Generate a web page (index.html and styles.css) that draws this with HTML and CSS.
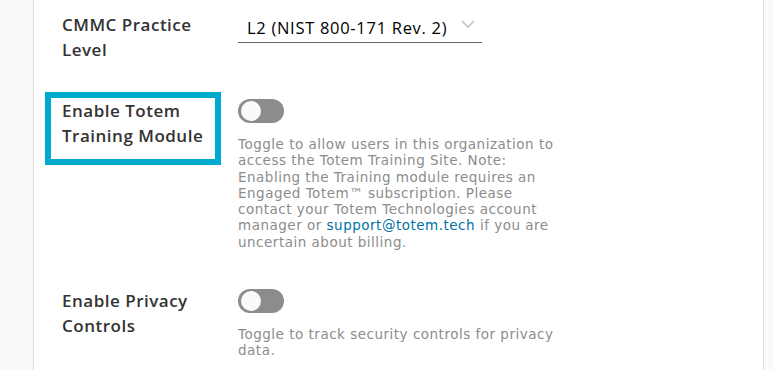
FILE: index.html
```html
<!DOCTYPE html>
<html lang="en">
<head>
    <meta charset="UTF-8">
    <title>Organization Settings</title>
    <link rel="stylesheet" href="styles.css">
</head>
<body>
    <div class="page">
        <div class="card">

            <!-- Practice level -->
            <div class="form-row">
                <div class="label">CMMC Practice Level</div>
                <div class="field">
                    <div class="select-wrap">
                        <span class="select-value">L2 (NIST 800-171 Rev. 2)</span>
                        <svg class="chevron" width="14" height="8" viewBox="0 0 14 8">
                            <path d="M1 1 L7 7 L13 1" fill="none" stroke="#b8b8b8" stroke-width="1.3"/>
                        </svg>
                    </div>
                </div>
            </div>

            <!-- Training module -->
            <div class="form-row row-training">
                <div class="label label-highlight">Enable Totem Training Module</div>
                <div class="field">
                    <div class="toggle"><span class="knob"></span></div>
                    <p class="help">Toggle to allow users in this organization to access the Totem Training Site. Note: Enabling the Training module requires an Engaged Totem™ subscription. Please contact your Totem Technologies account manager or <a href="#">support@totem.tech</a> if you are uncertain about billing.</p>
                </div>
            </div>

            <!-- Privacy -->
            <div class="form-row row-privacy">
                <div class="label">Enable Privacy Controls</div>
                <div class="field">
                    <div class="toggle"><span class="knob"></span></div>
                    <p class="help">Toggle to track security controls for privacy data.</p>
                </div>
            </div>

        </div>
    </div>
</body>
</html>
```

FILE: styles.css
```css
body {
    margin: 0;
    background: #fafafa;
    font-family: 'Open Sans', sans-serif;
    color: #333;
}

.page {
    padding: 0 9px 0 33px;
    height: 370px;
    overflow: hidden;
}

.card {
    background: #fff;
    border-left: 1px solid #dcdcdc;
    border-right: 1px solid #dcdcdc;
    min-height: 370px;
    padding: 12px 0 0 28px;
}

.form-row {
    display: grid;
    grid-template-columns: 176px 330px;
}

.label {
    font-size: 17px;
    font-weight: 600;
    line-height: 25px;
    letter-spacing: 0.5px;
    color: #333;
    width: 145px;
}

.label-highlight {
    border: 6px solid #00a9ce;
    margin: -6px 0 0 -17px;
    padding: 0 6px 0 11px;
    width: 147px;
    height: 61px;
}

.select-wrap {
    display: flex;
    align-items: center;
    justify-content: space-between;
    width: 235px;
    height: 30px;
    padding-left: 9px;
    border-bottom: 1px solid #666;
}

.select-value {
    font-size: 16.5px;
    letter-spacing: 0.7px;
    color: #000;
}

.chevron {
    margin-right: 7px;
    margin-bottom: 6px;
}

.row-training {
    margin-top: 36px;
}

.row-privacy {
    margin-top: 38px;
}

.toggle {
    width: 46px;
    height: 24px;
    border-radius: 12px;
    background: #8c8c8c;
    position: relative;
    margin-top: 1px;
}

.knob {
    position: absolute;
    left: 3px;
    top: 2px;
    width: 20px;
    height: 20px;
    border-radius: 50%;
    background: #fafafa;
}

.help {
    margin: 13px 0 0;
    font-family: 'DejaVu Sans', sans-serif;
    font-size: 13.5px;
    letter-spacing: 0.5px;
    line-height: 16.3px;
    color: #8c8c8c;
    width: 325px;
}

.help a {
    color: #0072a3;
    text-decoration: none;
}
```
